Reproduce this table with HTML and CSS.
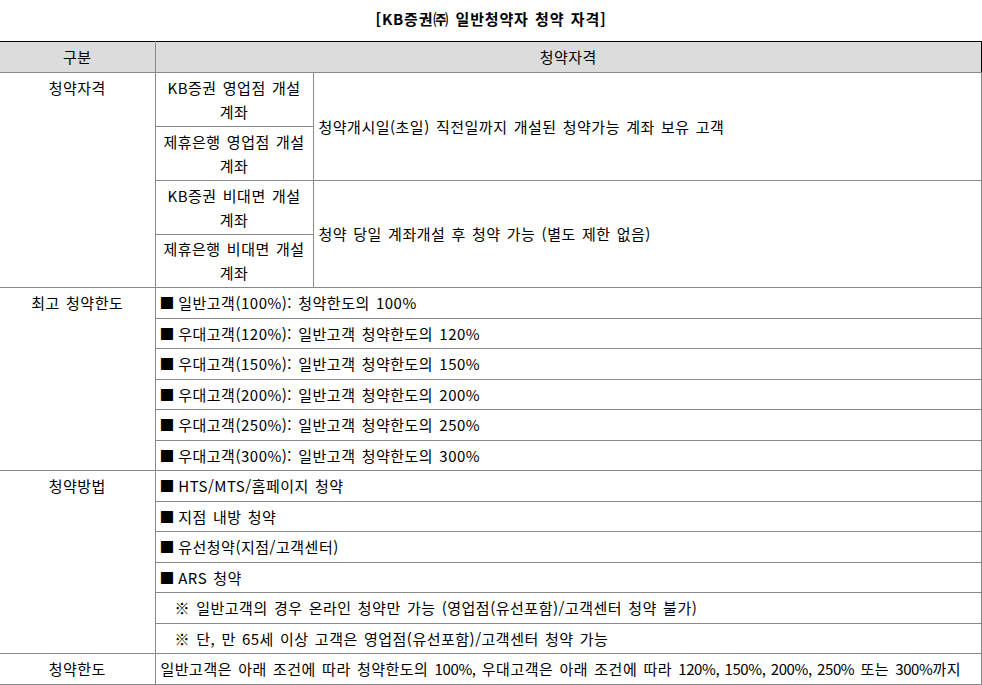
FILE: index.html
```html
<!DOCTYPE html>
<html lang="ko">
<head>
<meta charset="utf-8">
<title>KB증권 일반청약자 청약 자격</title>
<link rel="stylesheet" href="styles.css">
</head>
<body>
<div class="title">[KB증권㈜ 일반청약자 청약 자격]</div>
<table class="grid">
  <colgroup>
    <col class="c1">
    <col class="c2">
    <col class="c3">
  </colgroup>
  <thead>
    <tr>
      <th>구분</th>
      <th colspan="2">청약자격</th>
    </tr>
  </thead>
  <tbody>
    <tr>
      <td class="label" rowspan="4">청약자격</td>
      <td class="sub">KB증권 영업점 개설<br>계좌</td>
      <td class="mid" rowspan="2">청약개시일(초일) 직전일까지 개설된 청약가능 계좌 보유 고객</td>
    </tr>
    <tr>
      <td class="sub">제휴은행 영업점 개설<br>계좌</td>
    </tr>
    <tr>
      <td class="sub">KB증권 비대면 개설<br>계좌</td>
      <td class="mid" rowspan="2">청약 당일 계좌개설 후 청약 가능 (별도 제한 없음)</td>
    </tr>
    <tr>
      <td class="sub sub-last">제휴은행 비대면 개설<br>계좌</td>
    </tr>

    <tr>
      <td class="label" rowspan="6">최고 청약한도</td>
      <td class="item" colspan="2"><span class="sq">■</span> 일반고객(100%): 청약한도의 100%</td>
    </tr>
    <tr><td class="item" colspan="2"><span class="sq">■</span> 우대고객(120%): 일반고객 청약한도의 120%</td></tr>
    <tr><td class="item" colspan="2"><span class="sq">■</span> 우대고객(150%): 일반고객 청약한도의 150%</td></tr>
    <tr><td class="item" colspan="2"><span class="sq">■</span> 우대고객(200%): 일반고객 청약한도의 200%</td></tr>
    <tr><td class="item" colspan="2"><span class="sq">■</span> 우대고객(250%): 일반고객 청약한도의 250%</td></tr>
    <tr><td class="item" colspan="2"><span class="sq">■</span> 우대고객(300%): 일반고객 청약한도의 300%</td></tr>

    <tr>
      <td class="label" rowspan="6">청약방법</td>
      <td class="item" colspan="2"><span class="sq">■</span> HTS/MTS/홈페이지 청약</td>
    </tr>
    <tr><td class="item" colspan="2"><span class="sq">■</span> 지점 내방 청약</td></tr>
    <tr><td class="item" colspan="2"><span class="sq">■</span> 유선청약(지점/고객센터)</td></tr>
    <tr><td class="item" colspan="2"><span class="sq">■</span> ARS 청약</td></tr>
    <tr><td class="item note" colspan="2">※ 일반고객의 경우 온라인 청약만 가능 (영업점(유선포함)/고객센터 청약 불가)</td></tr>
    <tr><td class="item note" colspan="2">※ 단, 만 65세 이상 고객은 영업점(유선포함)/고객센터 청약 가능</td></tr>

    <tr>
      <td class="label">청약한도</td>
      <td class="item nowrap" colspan="2">일반고객은 아래 조건에 따라 청약한도의 <span class="n">100%,</span> 우대고객은 아래 조건에 따라 <span class="n">120%, 150%, 200%, 250%</span> 또는 <span class="n">300%</span>까지</td>
    </tr>
  </tbody>
</table>
</body>
</html>
```

FILE: styles.css
```css
html, body {
  margin: 0;
  padding: 0;
  background: #ffffff;
}

body {
  font-family: "Noto Sans CJK KR", "Noto Sans", sans-serif;
  font-size: 15px;
  color: #000;
  letter-spacing: 0.5px;
  word-spacing: 1.5px;
  width: 982px;
  overflow: hidden;
}

.title {
  height: 41px;
  line-height: 38px;
  text-align: center;
  font-weight: bold;
  font-size: 15px;
  letter-spacing: 0.8px;
}

.grid {
  width: 982px;
  border-collapse: collapse;
  table-layout: fixed;
  border-top: 1px solid #000;
  border-right: 1px solid #000;
}

.c1 { width: 155px; }
.c2 { width: 158px; }

.grid th,
.grid td {
  border: 1px solid #8a8a8a;
  line-height: 24px;
  padding: 3px 5px 2.5px;
  font-weight: normal;
}

.grid th:first-child,
.grid td.label {
  border-left: none;
}

.grid thead th {
  background: #dcdcdc;
  text-align: center;
  padding: 3px 5px 3px;
}

.grid thead tr th {
  border-top: 1px solid #000;
}

.grid thead tr th:last-child {
  border-right: 1px solid #000;
}

.label {
  text-align: center;
  vertical-align: top;
}

.grid td.sub {
  text-align: center;
  padding: 3px 2px 2px;
}

.grid td.sub-last {
  padding: 2px 2px 2px;
}

.mid {
  vertical-align: middle;
  text-align: left;
}

.item {
  text-align: left;
}

.sq {
  letter-spacing: -2.5px;
  margin-left: -1px;
}

.grid td.note {
  padding-left: 19px;
}

.n {
  letter-spacing: -0.4px;
}

.nowrap {
  white-space: nowrap;
}
```
